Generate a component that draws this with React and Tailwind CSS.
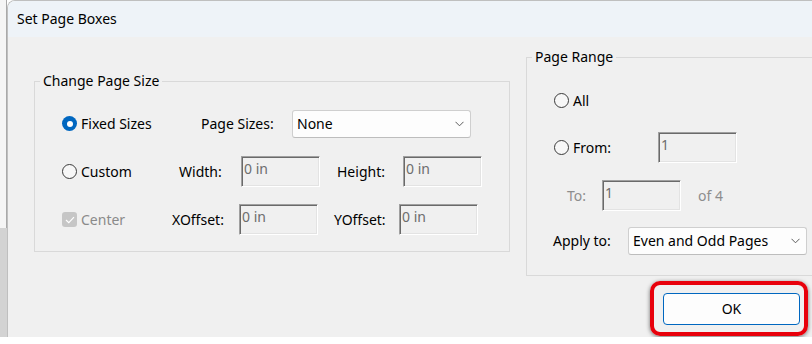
import React from 'react';

function Radio({ checked }) {
  if (checked) {
    return (
      <span className="flex h-[15px] w-[15px] shrink-0 items-center justify-center rounded-full bg-[#0067c0]">
        <span className="h-[6px] w-[6px] rounded-full bg-white" />
      </span>
    );
  }
  return <span className="h-[15px] w-[15px] shrink-0 rounded-full border border-[#3a3a3a] bg-[#f7f7f7]" />;
}

function Chevron() {
  return (
    <svg width="9" height="6" viewBox="0 0 9 6" className="shrink-0">
      <polyline points="0.5,0.8 4.5,4.8 8.5,0.8" fill="none" stroke="#5c5c5c" strokeWidth="1" />
    </svg>
  );
}

function Field({ value }) {
  return (
    <div className="h-[31px] w-[79px] shrink-0 border border-t-[#a0a0a0] border-l-[#a0a0a0] border-r-white border-b-white bg-[#f0f0f0] pl-[2px] pt-[2px] leading-[20px] text-[#6d6d6d] shadow-[inset_1px_1px_0_#6a6a6a,inset_-1px_-1px_0_#e3e3e3]">
      {value}
    </div>
  );
}

function Select({ value }) {
  return (
    <div className="flex h-[28px] w-[179px] shrink-0 items-center justify-between rounded-[3px] border border-[#cfcfcf] border-b-[#bdbdbd] bg-[#fdfdfd] pl-[4px] pr-[6px]">
      <span>{value}</span>
      <Chevron />
    </div>
  );
}

export default function App() {
  return (
    <div className="relative h-[344px] w-[812px] overflow-hidden bg-white font-['Noto_Sans',sans-serif] text-[14px] leading-[20px] text-black">
      <div className="flex h-[337px]">
        <div className="flex w-[7px] shrink-0 flex-col">
          <div className="flex-1 border-r border-[#a9a9a9] bg-[#f5f5f5]" />
          <div className="h-[109px] bg-[#d3d3d3]" />
        </div>

        <div className="flex flex-1 flex-col overflow-hidden rounded-tl-[8px] border-l border-t border-[#bfbfbf]">
          <div className="flex h-[36px] shrink-0 items-center bg-[#eef3f8] pl-[9px]">Set Page Boxes</div>

          <div className="flex flex-1 items-start gap-[16px] bg-[#f0f0f0] pl-[26px]">
            {/* Change Page Size */}
            <fieldset className="mt-[34px] w-[476px] shrink-0 border border-[#d9d9d9]">
              <legend className="ml-[5px] px-[3px] leading-[20px]">Change Page Size</legend>
              <div className="flex flex-col gap-[17px] pb-[16px] pl-[27px] pt-[17px]">
                <div className="flex h-[31px] items-center">
                  <div className="flex w-[139px] items-center gap-[4px]">
                    <Radio checked />
                    <span>Fixed Sizes</span>
                  </div>
                  <span className="w-[91px]">Page Sizes:</span>
                  <Select value="None" />
                </div>
                <div className="flex h-[31px] items-center">
                  <div className="flex w-[117px] items-center gap-[4px]">
                    <Radio />
                    <span>Custom</span>
                  </div>
                  <span className="w-[62px]">Width:</span>
                  <Field value="0 in" />
                  <span className="ml-[17px] w-[66px]">Height:</span>
                  <Field value="0 in" />
                </div>
                <div className="flex h-[31px] items-center">
                  <div className="flex w-[110px] items-center gap-[4px]">
                    <span className="flex h-[15px] w-[15px] shrink-0 items-center justify-center rounded-[3px] bg-[#c6c6c6]">
                      <svg width="10" height="8" viewBox="0 0 10 8">
                        <polyline points="1,4 3.8,6.6 9,1.2" fill="none" stroke="#ffffff" strokeWidth="1.2" />
                      </svg>
                    </span>
                    <span className="text-[#8a8a8a]">Center</span>
                  </div>
                  <span className="w-[67px]">XOffset:</span>
                  <Field value="0 in" />
                  <span className="ml-[16px] w-[65px]">YOffset:</span>
                  <Field value="0 in" />
                </div>
              </div>
            </fieldset>

            {/* Page Range */}
            <div className="flex shrink-0 flex-col">
              <fieldset className="mt-[10px] w-[292px] border border-[#d9d9d9]">
                <legend className="ml-[5px] px-[3px] leading-[20px]">Page Range</legend>
                <div className="flex flex-col pb-[20px] pl-[27px] pt-[18px]">
                  <div className="flex h-[31px] items-center gap-[4px]">
                    <Radio />
                    <span>All</span>
                  </div>
                  <div className="mt-[16px] flex h-[31px] items-center">
                    <div className="flex w-[104px] items-center gap-[4px]">
                      <Radio />
                      <span>From:</span>
                    </div>
                    <Field value="1" />
                  </div>
                  <div className="mt-[17px] flex h-[31px] items-center pl-[13px]">
                    <span className="w-[35px] text-[#8d8d8d]">To:</span>
                    <Field value="1" />
                    <span className="ml-[17px] text-[#8d8d8d]">of 4</span>
                  </div>
                  <div className="-ml-[1px] mt-[16px] flex h-[28px] items-center">
                    <span className="w-[75px]">Apply to:</span>
                    <Select value="Even and Odd Pages" />
                  </div>
                </div>
              </fieldset>

              <div className="relative ml-[137px] mt-[17px] w-[137px]">
                <button className="flex h-[32px] w-[137px] items-center justify-center rounded-[4px] border border-[#0067c0] bg-[#fdfdfd] text-black">
                  OK
                </button>
                <div className="pointer-events-none absolute -bottom-[11px] -left-[13px] -right-[8px] -top-[12px] rounded-[10px] border-[4px] border-[#e8000b] shadow-[0_1px_4px_rgba(0,0,0,0.55)]" />
              </div>
            </div>
          </div>
        </div>
      </div>
    </div>
  );
}
